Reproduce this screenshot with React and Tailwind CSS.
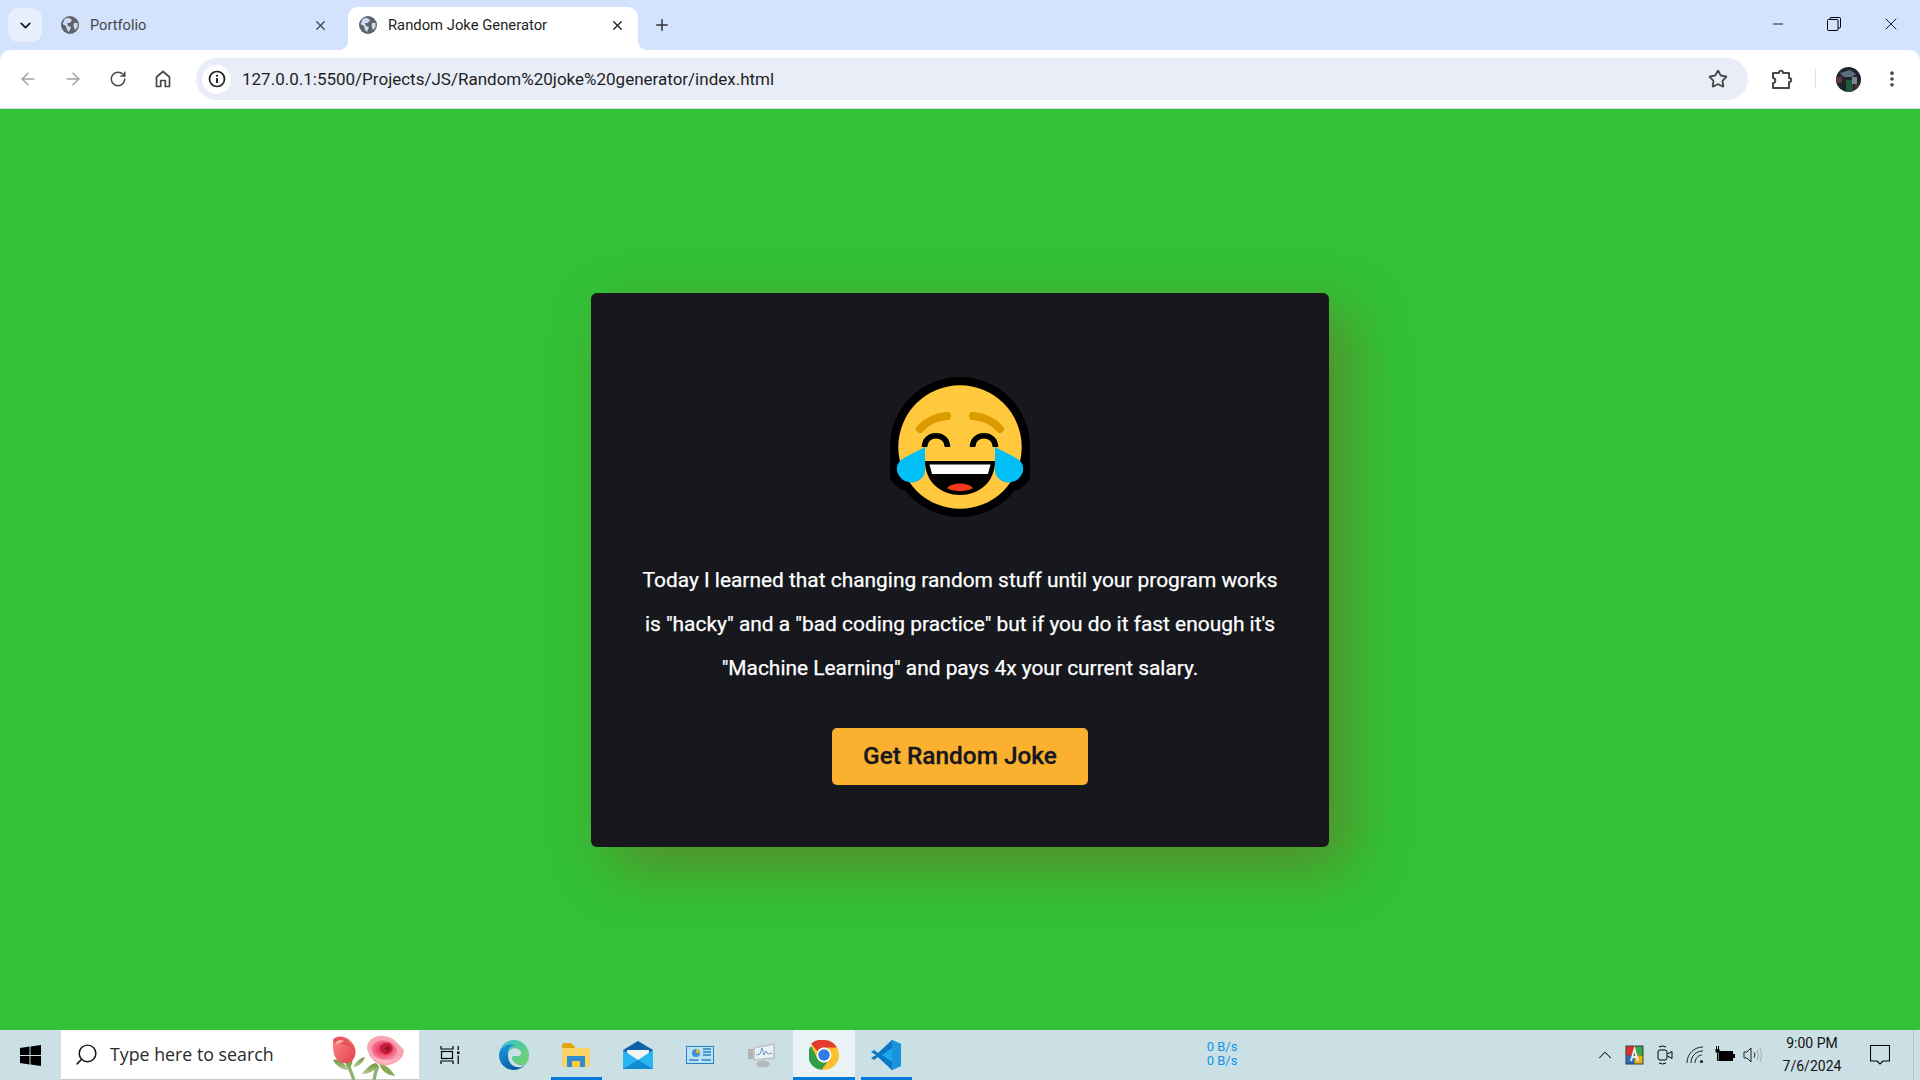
import { ArrowLeft, ArrowRight, RotateCw, ChevronDown, X, Plus, Star, EllipsisVertical, Search, Minus, ChevronUp } from "lucide-react";

const ui = "font-['Roboto',sans-serif]";

function Globe() {
  return (
    <svg width="18" height="18" viewBox="0 0 18 18" className="shrink-0">
      <circle cx="9" cy="9" r="9" fill="#5f6368" />
      <path d="M4 2.5 L8 2 L11 4 L9 7 L6 7 L7 10 L10 11 L8 16 L6 14 L5 10 L1.5 8 Z" fill="#d3e3fd" opacity="0.95" />
      <path d="M13 7 L16.5 7 L16.5 11 L14 14 L12.5 10 Z" fill="#d3e3fd" opacity="0.95" />
    </svg>
  );
}

function Home() {
  return (
    <svg width="20" height="20" viewBox="0 0 20 20" fill="none" stroke="#474747" strokeWidth="1.7">
      <path d="M3.5 17.5V8L10 2.5 16.5 8v9.5h-4.2v-6H7.7v6z" strokeLinejoin="round" />
    </svg>
  );
}

function Info() {
  return (
    <span className="w-[29px] h-[29px] ml-[6px] rounded-full bg-white flex items-center justify-center shrink-0">
      <svg width="18" height="18" viewBox="0 0 18 18">
        <circle cx="9" cy="9" r="7.5" fill="none" stroke="#1f1f1f" strokeWidth="1.7" />
        <rect x="8.1" y="8" width="1.9" height="5" fill="#1f1f1f" />
        <rect x="8.1" y="4.8" width="1.9" height="1.9" fill="#1f1f1f" />
      </svg>
    </span>
  );
}

function Puzzle() {
  return (
    <svg width="22" height="22" viewBox="0 0 22 22" fill="none" stroke="#474747" strokeWidth="2" strokeLinejoin="round">
      <path d="M2 5h6c0-3 4-3 4 0h6v5c3 0 3 4 0 4v6H2v-5c3 0 3-5 0-5z" />
    </svg>
  );
}

function Avatar() {
  return (
    <svg width="25" height="25" viewBox="0 0 25 25">
      <defs>
        <clipPath id="av"><circle cx="12.5" cy="12.5" r="12.5" /></clipPath>
      </defs>
      <g clipPath="url(#av)">
        <rect width="25" height="25" fill="#20232c" />
        <path d="M4 6 L14 3 L20 7 L16 10 L8 10Z" fill="#5d6e7c" />
        <rect x="10" y="13" width="7" height="12" fill="#23593a" />
        <rect x="0" y="10" width="6" height="6" fill="#5a3844" />
        <rect x="16" y="10" width="5" height="7" fill="#7d8896" />
        <rect x="18" y="17" width="5" height="6" fill="#4a3030" />
      </g>
    </svg>
  );
}

function LaughEmoji() {
  const tearLeft = "M35 70 L35 93 C35 103 24 108 15 104 C7 100 4 90 10 84 C14 80 26 75 35 70Z";
  const tearRight = "M105 70 L105 93 C105 103 116 108 125 104 C133 100 136 90 130 84 C126 80 114 75 105 70Z";
  return (
    <svg width="140" height="140" viewBox="0 0 140 140">
      <circle cx="70" cy="70" r="70" fill="#000" />
      <path d={tearLeft} fill="#000" stroke="#000" strokeWidth="18" strokeLinejoin="round" />
      <path d={tearRight} fill="#000" stroke="#000" strokeWidth="18" strokeLinejoin="round" />
      <circle cx="70" cy="70" r="61.7" fill="#ffc83d" />
      <path d="M30 52 C36 45 45 40 57 39" fill="none" stroke="#dd9a00" strokeWidth="8" strokeLinecap="round" />
      <path d="M83 39 C95 40 104 45 110 52" fill="none" stroke="#dd9a00" strokeWidth="8" strokeLinecap="round" />
      <path d="M34.5 70 C34.5 55 57.5 55 57.5 70" fill="none" stroke="#000" strokeWidth="5.5" />
      <path d="M82.5 70 C82.5 55 105.5 55 105.5 70" fill="none" stroke="#000" strokeWidth="5.5" />
      <path d="M35 84 L105 84 C105 106 88 118 70 118 C52 118 35 106 35 84Z" fill="#000" />
      <path d="M39.5 87.5 L100.5 87.5 L98 97 L42 97Z" fill="#fff" />
      <path d="M57 111 C62 105 78 105 83 111 C78 115 62 115 57 111Z" fill="#f4391a" />
      <path d={tearLeft} fill="#00bef6" />
      <path d={tearRight} fill="#00bef6" />
    </svg>
  );
}

function WinLogo() {
  return (
    <svg width="21" height="21" viewBox="0 0 21 21" fill="#000">
      <path d="M0 3 L9.5 1.6 V10 H0Z" />
      <path d="M10.5 1.4 L21 0 V10 H10.5Z" />
      <path d="M0 11 H9.5 V19.4 L0 18Z" />
      <path d="M10.5 11 H21 V21 L10.5 19.6Z" />
    </svg>
  );
}

function Roses() {
  return (
    <svg width="76" height="50" viewBox="0 0 76 50">
      <defs>
        <radialGradient id="roseA" cx="0.5" cy="0.45" r="0.6">
          <stop offset="0" stopColor="#d81f3f" />
          <stop offset="0.5" stopColor="#ef4f78" />
          <stop offset="1" stopColor="#fb9cb0" />
        </radialGradient>
        <linearGradient id="roseB" x1="0" y1="0" x2="1" y2="1">
          <stop offset="0" stopColor="#f98a86" />
          <stop offset="1" stopColor="#e5404c" />
        </linearGradient>
        <linearGradient id="leaf" x1="0" y1="0" x2="0" y2="1">
          <stop offset="0" stopColor="#6f9440" />
          <stop offset="1" stopColor="#b4ca8a" />
        </linearGradient>
      </defs>
      <path d="M19 34 Q22 42 25 50" stroke="#8fb072" strokeWidth="3.4" fill="none" />
      <path d="M49 36 Q46 42 45 50" stroke="#8fb072" strokeWidth="3.4" fill="none" />
      <path d="M4 30 C10 28 14 32 20 40 C13 40 7 36 4 30Z" fill="url(#leaf)" />
      <path d="M20 38 C14 34 17 28 19 25 C24 28 25 34 20 38Z" fill="#7ea24d" />
      <path d="M24 37 C27 32 31 28 36 27 C34 33 29 37 24 37Z" fill="url(#leaf)" />
      <path d="M33 44 C37 38 42 34 47 33 L50 36 C45 41 39 44 33 44Z" fill="url(#leaf)" />
      <path d="M50 33 C56 34 62 39 66 46 C58 45 52 41 50 33Z" fill="#88a955" />
      <path d="M5 8 C11 5 19 6 24 14 C28 20 27 28 22 32 C15 35 7 32 5 24 C4 18 3 12 5 8Z" fill="url(#roseB)" />
      <path d="M4 10 C8 6 14 6 19 11 C22 14 25 17 27 22 C22 16 13 13 6 14Z" fill="#e8555b" />
      <path d="M6 14 C8 10 12 9 15 11 C12 13 9 14 6 14Z" fill="#fbb5ac" />
      <path d="M38 18 C38 10 46 5 55 6 C65 7 69 14 75 20 C75 28 68 33 60 35 C50 37 40 30 38 18Z" fill="#f9a3b3" />
      <path d="M42 18 C44 11 52 9 59 11 C67 14 71 21 66 27 C60 32 48 31 44 25Z" fill="url(#roseA)" />
      <path d="M51 20 C50 15 55 12 60 13 C64 15 65 20 62 22 C58 26 53 24 51 20Z" fill="#c51f38" />
      <path d="M55 18 L60 16 L61 20 L58 21Z" fill="#8a1526" />
      <path d="M40 20 C45 29 57 34 70 27 C63 36 46 37 40 20Z" fill="#fbb7c2" />
    </svg>
  );
}

function TaskView() {
  return (
    <svg width="20" height="20" viewBox="0 0 20 20" fill="none" stroke="#000" strokeWidth="1.2">
      <path d="M1 1v3h12V1M1 19v-3h12v3" />
      <rect x="1.5" y="6.5" width="11" height="7" />
      <rect x="17" y="6.5" width="2.4" height="2.4" fill="#000" stroke="none" />
      <path d="M18.2 1v4M18.2 10.5v8.5" />
    </svg>
  );
}

function Edge() {
  return (
    <svg width="30" height="30" viewBox="0 0 30 30">
      <defs>
        <linearGradient id="edA" x1="0" y1="0" x2="1" y2="1">
          <stop offset="0" stopColor="#35c1d6" />
          <stop offset="1" stopColor="#7fd65a" />
        </linearGradient>
        <linearGradient id="edB" x1="0" y1="0" x2="0.6" y2="1">
          <stop offset="0" stopColor="#1b9de2" />
          <stop offset="1" stopColor="#0c59a4" />
        </linearGradient>
      </defs>
      <circle cx="15" cy="15" r="15" fill="url(#edA)" />
      <path d="M0 15 C1 7 9 3 16 5 C11 6 9 9 9 12 C9 20 16 26 26 25 C22 29 17 30 14 30 C6 29.5 0 23 0 15Z" fill="url(#edB)" />
      <path d="M9 15 C9 9 15 7 19 9 C23 11 23 15 20 16 C17 16.5 13 15 13 18 C13 22 19 26 26 25 C20 30 9 27 9 15Z" fill="#ccdfe4" />
    </svg>
  );
}

function Explorer() {
  return (
    <svg width="28" height="24" viewBox="0 0 28 24">
      <path d="M0 2 Q0 0 2 0 H9 L12 3 H13 V6 H0Z" fill="#e3a40f" />
      <path d="M0 5 H26 Q28 5 28 7 V24 H0Z" fill="#fbd467" />
      <path d="M5 24 V13 H23 V24 H18 V18 H10 V24Z" fill="#2f8fd1" />
      <rect x="10" y="18" width="8" height="6" fill="#fcc93d" />
    </svg>
  );
}

function Mail() {
  return (
    <svg width="30" height="28" viewBox="0 0 30 28">
      <path d="M0 9 L15 0 L30 9 V28 H0Z" fill="#0d61a8" />
      <path d="M4 9 H26 L26 14 L15 20 L4 14Z" fill="#f1f5f8" />
      <path d="M0 9 L15 19 L30 9 V28 H0Z" fill="#27b4ef" />
      <path d="M0 28 L15 19 L30 28Z" fill="#128ad2" />
    </svg>
  );
}

function ControlPanel() {
  return (
    <svg width="28" height="18" viewBox="0 0 28 18">
      <rect width="28" height="18" fill="#2a80c0" />
      <rect x="1" y="1" width="26" height="16" fill="#b8e2f6" />
      <circle cx="10" cy="7" r="4" fill="#3f92cf" />
      <path d="M10 7V3a4 4 0 0 1 4 4Z" fill="#ecae3a" />
      <path d="M17 3h8M17 6h8M17 9h8" stroke="#2a80c0" strokeWidth="1.6" />
      <path d="M3 14h22" stroke="#2a80c0" strokeWidth="1.4" />
      <circle cx="14" cy="14" r="1.5" fill="#e0e8ee" />
    </svg>
  );
}

function Monitor() {
  return (
    <svg width="28" height="26" viewBox="0 0 28 26">
      <ellipse cx="15" cy="22" rx="7" ry="3.5" fill="#b5b9bb" />
      <rect x="0" y="7" width="6" height="10" fill="#b0b3b2" />
      <path d="M5 5 L27 1 V17 L5 19Z" fill="#c3c7c8" />
      <path d="M7 6.5 L25 3 V15 L7 17Z" fill="#e9f2f8" />
      <path d="M8 13 L12 12 L14 6 L16 13 L18 9 L20 12 L24 11" stroke="#5d8fc4" fill="none" strokeWidth="0.9" />
    </svg>
  );
}

function Chrome() {
  return (
    <svg width="30" height="30" viewBox="0 0 30 30">
      <circle cx="15" cy="15" r="15" fill="#fbc02d" />
      <path d="M15 0 A15 15 0 0 1 28 7.5 H15 A7.5 7.5 0 0 0 8.5 11.3 L2 3.8 A15 15 0 0 1 15 0Z" fill="#e33b2e" />
      <path d="M2 6 A15 15 0 0 0 12.6 29.8 L18.7 21.5 A7.5 7.5 0 0 1 8.5 18.8Z" fill="#2f9e44" />
      <circle cx="15" cy="15" r="7.4" fill="#fff" />
      <circle cx="15" cy="15" r="5.8" fill="#2f7be8" />
    </svg>
  );
}

function VsCode() {
  return (
    <svg width="30" height="30" viewBox="0 0 30 30">
      <path d="M21 0 L30 4 V26 L21 30 L7 17 L11 14Z" fill="#1fa4ee" />
      <path d="M21 0 L21 30 L30 26 V4Z" fill="#1a92dc" />
      <path d="M21 0 L7 13 L3 10 L0 12 L5 15 L0 18 L3 20 L7 17 L21 30 V22 L11 15 L21 8Z" fill="#0a78c2" />
    </svg>
  );
}

function AppTile() {
  return (
    <svg width="19" height="28" viewBox="0 0 19 28">
      <rect x="0.5" y="4.5" width="18" height="19" fill="#3b3b3b" />
      <rect x="1.5" y="5.5" width="8" height="9" fill="#d8322a" />
      <rect x="9.5" y="5.5" width="8" height="9" fill="#3aa648" />
      <rect x="1.5" y="14.5" width="8" height="8" fill="#2a6fc4" />
      <rect x="9.5" y="14.5" width="8" height="8" fill="#e7b416" />
      <path d="M6 20 L9.5 8 L13 20 M7.4 16 H11.6" stroke="#f0f0f0" strokeWidth="1.8" fill="none" />
    </svg>
  );
}

function MeetNow() {
  return (
    <svg width="16" height="20" viewBox="0 0 16 20" fill="none" stroke="#000" strokeWidth="1">
      <rect x="1" y="5" width="9" height="10" rx="2" />
      <path d="M10.5 9 L15 6.5 V13.5 L10.5 11" />
      <path d="M2 2 Q5.5 0 9 2 M2 18 Q5.5 20 9 18" />
    </svg>
  );
}

function Wifi() {
  return (
    <svg width="20" height="20" viewBox="0 0 20 20" fill="none" stroke="#222" strokeWidth="1">
      <path d="M1 18 C1 9 8 2 17 2" />
      <path d="M5 18 C5 11 10 6 17 6" />
      <path d="M9 18 C9 14 12 10 16 10" />
      <circle cx="15.5" cy="16.5" r="1.6" fill="#222" stroke="none" />
    </svg>
  );
}

function Battery() {
  return (
    <svg width="20" height="18" viewBox="0 0 20 18">
      <rect x="3.5" y="5" width="14.5" height="10" fill="#000" />
      <rect x="18" y="8" width="2" height="4" fill="#000" />
      <path d="M1.5 0v3M3.5 0v3" stroke="#000" strokeWidth="1" fill="none" />
      <rect x="0.5" y="3" width="4" height="3.5" fill="#000" />
      <path d="M2.5 6.5v8h1" stroke="#000" strokeWidth="1" fill="none" />
    </svg>
  );
}

function Volume() {
  return (
    <svg width="20" height="20" viewBox="0 0 20 20" fill="none" stroke="#222" strokeWidth="1">
      <path d="M1 7 H4 L8 3 V17 L4 13 H1Z" />
      <path d="M11 7.5 Q13 10 11 12.5" />
      <path d="M14 5 Q17 10 14 15" stroke="#9aa" />
      <path d="M17 3 Q20 10 17 17" stroke="#aab" />
    </svg>
  );
}

function Notice() {
  return (
    <svg width="20" height="20" viewBox="0 0 20 20" fill="none" stroke="#000" strokeWidth="1.1">
      <path d="M0.5 0.5 H19.5 V16 H13 L10 19 L7 16 H0.5Z" />
    </svg>
  );
}

function TaskItem({ children, bar, active }) {
  return (
    <div className={`relative w-[62px] h-full flex items-center justify-center ${active ? "bg-[#e9f2f5]" : ""}`}>
      {children}
      {bar && <span className={`absolute bottom-0 h-[3px] bg-[#0078d7] ${active ? "inset-x-0" : "left-[6px] w-[51px]"}`} />}
    </div>
  );
}

function ToolBtn({ children, className = "w-[45px]" }) {
  return <div className={`${className} h-full flex items-center justify-center shrink-0`}>{children}</div>;
}

export default function App() {
  return (
    <div className={`w-[1920px] h-[1080px] flex flex-col overflow-hidden bg-[#d3e3fd] ${ui}`}>
      {/* tab strip */}
      <div className="h-[50px] bg-[#d3e3fd] flex items-end shrink-0 relative">
        <div className="self-start mt-[8px] ml-[8px] w-[34px] h-[34px] rounded-[10px] bg-[#e8f0fe] flex items-center justify-center">
          <ChevronDown size={17} strokeWidth={2.6} color="#1f1f1f" />
        </div>
        <div className="self-start mt-[7px] h-[36px] w-[306px] pl-[19px] pr-[20px] flex items-center text-[14.6px] text-[#474747]">
          <Globe />
          <span className="ml-[11px] pt-[1px]">Portfolio</span>
          <X size={15} strokeWidth={2} color="#444" className="ml-auto" />
        </div>
        <div className="relative h-[43px] w-[290px] bg-white rounded-t-[10px] pl-[11px] pr-[13px] pb-[7px] flex items-center text-[14.8px] text-[#1f1f1f]">
          <span className="absolute -left-[10px] bottom-0 w-[10px] h-[10px] bg-[radial-gradient(circle_at_0_0,transparent_10px,white_10.5px)]" />
          <Globe />
          <span className="ml-[11px]">Random Joke Generator</span>
          <X size={15} strokeWidth={2.2} color="#1f1f1f" className="ml-auto" />
          <span className="absolute -right-[10px] bottom-0 w-[10px] h-[10px] bg-[radial-gradient(circle_at_100%_0,transparent_10px,white_10.5px)]" />
        </div>
        <div className="self-start mt-[7px] ml-[15px] h-[36px] flex items-center">
          <Plus size={18} strokeWidth={2} color="#333" />
        </div>
        <div className="ml-auto self-start h-[48px] flex items-center">
          <ToolBtn className="w-[56px]"><Minus size={16} strokeWidth={1.3} color="#000" /></ToolBtn>
          <ToolBtn className="w-[56px]">
            <svg width="14" height="14" viewBox="0 0 14 14" fill="none" stroke="#000" strokeWidth="1">
              <rect x="0.5" y="2.5" width="10.5" height="11" rx="1" />
              <path d="M3 2.5V1.5a1 1 0 0 1 1-1h8.5a1 1 0 0 1 1 1V10a1 1 0 0 1-1 1H11" />
            </svg>
          </ToolBtn>
          <ToolBtn className="w-[58px]"><X size={20} strokeWidth={1.1} color="#000" /></ToolBtn>
        </div>
      </div>

      {/* toolbar */}
      <div className="h-[59px] bg-white rounded-t-[10px] flex items-center border-b border-[#dcdcdc] shrink-0 pl-[5px] text-[#1f1f1f]">
        <ToolBtn><ArrowLeft size={20} strokeWidth={1.8} color="#a0a3a6" /></ToolBtn>
        <ToolBtn><ArrowRight size={20} strokeWidth={1.8} color="#a0a3a6" /></ToolBtn>
        <ToolBtn><RotateCw size={18} strokeWidth={2} color="#474747" /></ToolBtn>
        <ToolBtn><Home /></ToolBtn>
        <div className="ml-[11px] w-[1552px] h-[42px] rounded-full bg-[#e9edf7] flex items-center">
          <Info />
          <span className="ml-[11px] pt-[2px] text-[17px] text-[#1f1f1f]">127.0.0.1:5500/Projects/JS/Random%20joke%20generator/index.html</span>
          <Star size={20} strokeWidth={2.2} color="#474747" className="ml-auto mr-[20px]" />
        </div>
        <ToolBtn className="w-[67px]"><Puzzle /></ToolBtn>
        <span className="w-[1px] h-[20px] bg-[#d3e3fd]" />
        <ToolBtn className="w-[64px]"><Avatar /></ToolBtn>
        <EllipsisVertical size={20} strokeWidth={2.4} color="#474747" className="ml-[2px]" />
      </div>

      {/* page */}
      <main className="flex-1 bg-[#32c238] flex items-center justify-center">
        <div className="w-[738px] h-[554px] bg-[#16181d] rounded-[6px] shadow-[20px_20px_60px_rgba(127,80,20,0.48)] flex flex-col items-center pt-[84px]">
          <LaughEmoji />
          <p className="mt-[41px] w-[680px] text-center text-white text-[20.9px] leading-[44px] font-normal font-['Roboto',sans-serif] [-webkit-text-stroke:0.25px_white]">
            Today I learned that changing random stuff until your program works<br />
            is "hacky" and a "bad coding practice" but if you do it fast enough it's<br />
            "Machine Learning" and pays 4x your current salary.
          </p>
          <button className="mt-[38px] w-[256px] h-[57px] pt-[1px] rounded-[5px] bg-[#fbb12f] text-[#16181d] text-[24.4px] font-medium font-['Roboto',sans-serif] [-webkit-text-stroke:0.3px_#16181d]">
            Get Random Joke
          </button>
        </div>
      </main>

      {/* windows taskbar */}
      <div className="h-[50px] bg-[#cbe0e5] flex items-center shrink-0">
        <div className="w-[61px] h-full flex items-center justify-center"><WinLogo /></div>
        <div className="w-[358px] h-full bg-white border-b border-[#c8c8c8] flex items-center relative font-['Open_Sans',sans-serif]">
          <Search size={25} strokeWidth={1.4} color="#111" className="ml-[13px] -scale-x-100" />
          <span className="ml-[11px] text-[17.8px] text-[#2b2b2b]">Type here to search</span>
          <span className="absolute right-[14px] top-0"><Roses /></span>
        </div>
        <TaskItem><TaskView /></TaskItem>
        <div className="w-[2px]" />
        <TaskItem><Edge /></TaskItem>
        <TaskItem bar><Explorer /></TaskItem>
        <TaskItem><Mail /></TaskItem>
        <TaskItem><ControlPanel /></TaskItem>
        <TaskItem><Monitor /></TaskItem>
        <TaskItem bar active><Chrome /></TaskItem>
        <TaskItem bar><VsCode /></TaskItem>
        <div className="ml-[289px] w-[32px] -mt-[3px] text-[13px] leading-[14px] text-center text-[#0f96e8]">
          <div>0 B/s</div>
          <div>0 B/s</div>
        </div>
        <div className="ml-auto flex items-center h-full">
          <ToolBtn className="w-[30px]"><ChevronUp size={22} strokeWidth={1.1} color="#111" /></ToolBtn>
          <ToolBtn className="w-[29px]"><AppTile /></ToolBtn>
          <ToolBtn className="w-[32px]"><MeetNow /></ToolBtn>
          <ToolBtn className="w-[30px]"><Wifi /></ToolBtn>
          <ToolBtn className="w-[27px]"><Battery /></ToolBtn>
          <ToolBtn className="w-[30px]"><Volume /></ToolBtn>
          <div className="w-[88px] text-center text-[14px] leading-[23px] text-[#111]">
            <div>9:00 PM</div>
            <div>7/6/2024</div>
          </div>
          <ToolBtn className="w-[48px]"><Notice /></ToolBtn>
          <div className="w-[16px] h-full flex justify-end pr-[6px]"><span className="w-[1px] h-full bg-[#b4c6cb]" /></div>
        </div>
      </div>
    </div>
  );
}
